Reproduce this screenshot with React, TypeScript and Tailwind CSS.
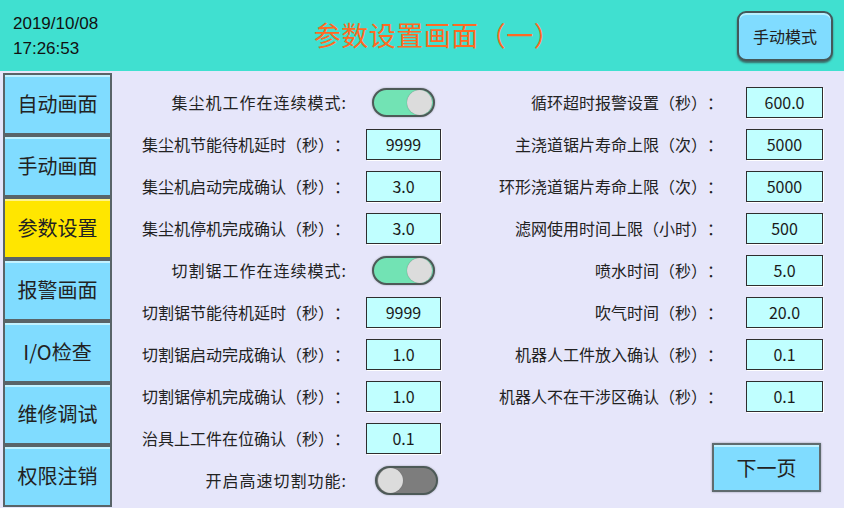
const FONT = '"Noto Sans CJK SC", "Noto Sans", sans-serif';

const navItems = ['自动画面', '手动画面', '参数设置', '报警画面', 'I/O检查', '维修调试', '权限注销'];

type Row =
  | { kind: 'input'; label: string; value: string }
  | { kind: 'toggle'; label: string; on: boolean };

const leftRows: Row[] = [
  { kind: 'toggle', label: '集尘机工作在连续模式:', on: true },
  { kind: 'input', label: '集尘机节能待机延时（秒）：', value: '9999' },
  { kind: 'input', label: '集尘机启动完成确认（秒）：', value: '3.0' },
  { kind: 'input', label: '集尘机停机完成确认（秒）：', value: '3.0' },
  { kind: 'toggle', label: '切割锯工作在连续模式:', on: true },
  { kind: 'input', label: '切割锯节能待机延时（秒）：', value: '9999' },
  { kind: 'input', label: '切割锯启动完成确认（秒）：', value: '1.0' },
  { kind: 'input', label: '切割锯停机完成确认（秒）：', value: '1.0' },
  { kind: 'input', label: '治具上工件在位确认（秒）：', value: '0.1' },
  { kind: 'toggle', label: '开启高速切割功能:', on: false },
];

const rightRows = [
  { label: '循环超时报警设置（秒）：', value: '600.0' },
  { label: '主浇道锯片寿命上限（次）：', value: '5000' },
  { label: '环形浇道锯片寿命上限（次）：', value: '5000' },
  { label: '滤网使用时间上限（小时）：', value: '500' },
  { label: '喷水时间（秒）：', value: '5.0' },
  { label: '吹气时间（秒）：', value: '20.0' },
  { label: '机器人工件放入确认（秒）：', value: '0.1' },
  { label: '机器人不在干涉区确认（秒）：', value: '0.1' },
];

function Toggle({ on }: { on: boolean }) {
  return (
    <div
      className={`w-[63px] h-[29px] rounded-full border-2 border-[#4d5a57] flex items-center px-[1px] shadow-[0_0_2px_#9a9aaa] ${
        on ? 'bg-[#72e3b4] justify-end' : 'bg-[#7d7d7d] justify-start'
      }`}
    >
      <div className="w-[25px] h-[25px] rounded-full bg-[#dcdcdc] shadow-[0_0_1px_#666]" />
    </div>
  );
}

function ValueBox({ value, width }: { value: string; width: string }) {
  return (
    <div
      className={`${width} h-[31px] border-[1.5px] border-[#2e2e2e] bg-[#c0ffff] flex items-center justify-center text-[16px] text-[#1a1a1a] shadow-[1px_1px_0_#ffffff]`}
    >
      {value}
    </div>
  );
}

export default function App() {
  return (
    <div
      className="w-[844px] h-[508px] bg-[#e6e6fa] flex flex-col overflow-hidden text-[#222] [text-spacing-trim:space-all]"
      style={{ fontFamily: FONT }}
    >
      {/* header */}
      <div className="h-[71px] bg-[#40e0d0] flex items-center shrink-0">
        <div
          className="w-[110px] pl-[13px] flex flex-col text-[17px] leading-[25px] text-[#111] pt-[1px]"
          style={{ fontFamily: '"Liberation Sans", Arial, sans-serif' }}
        >
          <span>2019/10/08</span>
          <span>17:26:53</span>
        </div>
        <div className="flex-1 text-center pl-[28px] text-[27px] text-[#ff6a22] pb-[1px] tracking-[0.5px]">
          参数设置画面（一）
        </div>
        <div className="mr-[11px] w-[96px] h-[50px] rounded-[9px] border-2 border-[#44585a] bg-[#80dcff] flex items-center justify-center text-[16px] shadow-[0_2px_2px_#3a6a68,inset_0_2px_0_#b8f0ff]">
          手动模式
        </div>
      </div>

      {/* body */}
      <div className="flex flex-1">
        {/* sidebar */}
        <div className="w-[115px] pl-[3px] pt-[2px] flex flex-col shrink-0">
          {navItems.map((n, i) => (
            <div
              key={n}
              className={`w-[109px] h-[62px] border-2 border-[#596468] flex items-center justify-center text-[20px] ${
                i === 2
                  ? 'bg-[#ffe600] shadow-[inset_0_2px_0_#fff38a]'
                  : 'bg-[#80dcff] shadow-[inset_0_2px_0_#c2f2ff]'
              }`}
            >
              {n}
            </div>
          ))}
        </div>

        {/* left column */}
        <div className="w-[326px] pt-[10px] flex flex-col shrink-0">
          {leftRows.map((r) => (
            <div key={r.label} className="h-[42px] flex items-center">
              {r.kind === 'input' ? (
                <>
                  <div className="w-[235px] text-right text-[16px] whitespace-nowrap">{r.label}</div>
                  <div className="ml-[16px]">
                    <ValueBox value={r.value} width="w-[75px]" />
                  </div>
                </>
              ) : (
                <>
                  <div className="w-[235px] pr-[3px] text-right text-[16px] whitespace-nowrap tracking-[1px]">
                    {r.label}
                  </div>
                  <div className={r.on ? 'ml-[22px]' : 'ml-[25px]'}>
                    <Toggle on={r.on} />
                  </div>
                </>
              )}
            </div>
          ))}
        </div>

        {/* right column */}
        <div className="flex-1 pt-[10px] flex flex-col">
          {rightRows.map((r) => (
            <div key={r.label} className="h-[42px] flex items-center">
              <div className="w-[282px] text-right text-[16px] whitespace-nowrap">{r.label}</div>
              <div className="ml-[23px]">
                <ValueBox value={r.value} width="w-[77px]" />
              </div>
            </div>
          ))}
          <div className="mt-[26px] flex justify-end pr-[23px]">
            <div className="w-[109px] h-[49px] border-2 border-[#5f6b6e] bg-[#80dcff] flex items-center justify-center text-[20px] shadow-[inset_0_2px_0_#c2f2ff,0_0_2px_#9a9aaa]">
              下一页
            </div>
          </div>
        </div>
      </div>
    </div>
  );
}
